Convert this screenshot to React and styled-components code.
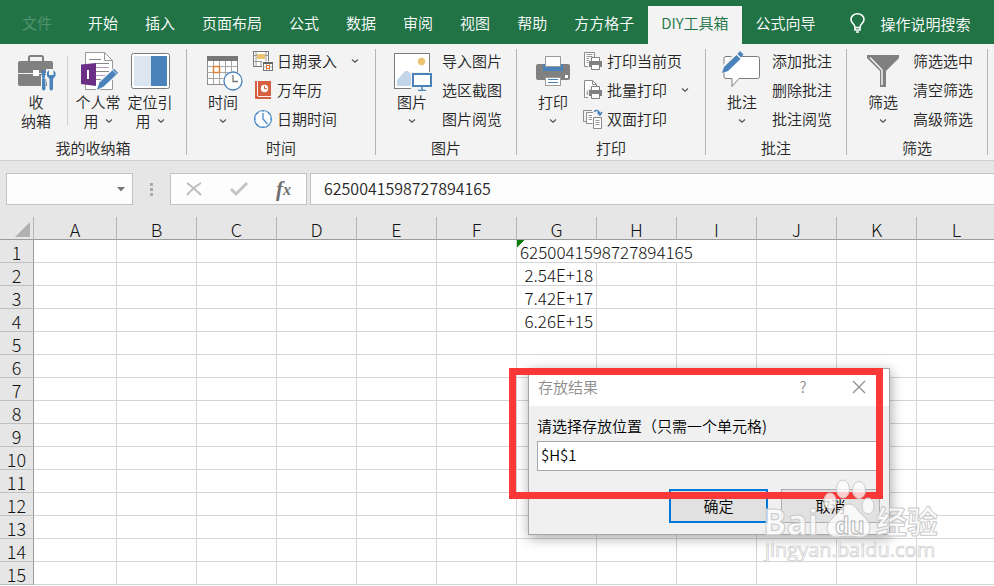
import React from 'react'
import styled, { createGlobalStyle, css } from 'styled-components'

const tabs = ['开始', '插入', '页面布局', '公式', '数据', '审阅', '视图', '帮助', '方方格子', 'DIY工具箱', '公式向导']
const columns = ['A', 'B', 'C', 'D', 'E', 'F', 'G', 'H', 'I', 'J', 'K', 'L']
const rows = Array.from({ length: 15 }, (_, i) => i + 1)
const cells = {
    G1: '6250041598727894165',
    G2: '2.54E+18',
    G3: '7.42E+17',
    G4: '6.26E+15',
}

/* ---------- icons ---------- */

const Chevron = () => (
    <svg width='8' height='6' viewBox='0 0 8 6' fill='none' stroke='#555' strokeWidth='1.2'>
        <path d='M1 1.500l3 2.600 3-2.600' />
    </svg>
)

const BulbIcon = () => (
    <svg width='15' height='20' viewBox='0 0 15 20' fill='none' stroke='#fff' strokeWidth='1.6'>
        <path d='M5 14.500c0-4-4-4-4-8a6.500 5.700 0 0 1 13 0c0 4-4 4-4 8zM5 14v3h5v-3M6 19h3' />
    </svg>
)

const ToolboxIcon = () => (
    <svg width='40' height='40' viewBox='0 0 40 40'>
        <path d='M13 10V6.500Q13 5 14.500 5h11Q27 5 27 6.500V10' fill='none' stroke='#808080' strokeWidth='2' />
        <rect x='2' y='10' width='35' height='25' rx='2' fill='#808080' />
        <path d='M2 22.500h35' stroke='#f3f3f3' />
        <rect x='17' y='19' width='6' height='6' fill='#fff' />
        <path d='M25 24h5v16h-5zM30 18h10v10l-2 12h-6l-2-12z' fill='#f3f3f3' />
        <path d='M26.500 19h2l1 2-1 7h-2l-1-7z' fill='#4a82ba' />
        <path d='M26 28h3.500v10q-2 3-3.500 0z' fill='#4a82ba' />
        <path d='M33 19l-2 2.500v3.500l2.500 3V38q1.500 3 3.500 0V28l2.500-3v-3.500l-2-2.500v5h-4.500z' fill='#4a82ba' />
    </svg>
)

const NotebookIcon = () => (
    <svg width='40' height='40' viewBox='0 0 40 40'>
        <path d='M7.500 1.500h19l8 8v29h-27z' fill='#fff' stroke='#999' />
        <path d='M26.500 1.500v8h8' fill='none' stroke='#999' />
        <path d='M11 8.500h12M18 12.500h13M18 20.500h13M18 28.500h7' stroke='#888' />
        <path d='M18 16.500h13M18 24.500h10' stroke='#b79ac6' />
        <path d='M3 13.500L18 12v23L3 33z' fill='#6b2f86' />
        <path d='M10 19v9' stroke='#fff' strokeWidth='2' />
        <path d='M18 40l3-9 15-14 5 5-15 14z' fill='#4a82ba' stroke='#f3f3f3' strokeWidth='1.200' />
        <path d='M34 18.500l4.500 4.500' stroke='#dbe6f1' />
    </svg>
)

const PanelIcon = () => (
    <svg width='40' height='40' viewBox='0 0 40 40'>
        <rect x='1.500' y='2.500' width='38' height='35' rx='2' fill='#fff' stroke='#7b7b7b' />
        <path d='M4 5h17v30H4z' fill='#dce6f0' />
        <path d='M21 5h16v30H21z' fill='#4a82ba' />
    </svg>
)

const CalendarIcon = () => (
    <svg width='40' height='40' viewBox='0 0 40 40'>
        <rect x='4.500' y='5.500' width='30' height='28' fill='#fff' stroke='#8c8c8c' />
        <path d='M4 5h31v5H4z' fill='#777' />
        <path d='M10.500 10v23M16.500 10v23M22.500 10v23M28.500 10v23M4 15.500h30M4 21.500h30M4 27.500h30' stroke='#a6a6a6' />
        <rect x='10.500' y='15.500' width='6' height='6' fill='#fff' stroke='#e0853c' strokeWidth='1.500' />
        <circle cx='30' cy='30' r='10' fill='#f3f3f3' />
        <circle cx='30' cy='30' r='9' fill='#fff' stroke='#4a82ba' strokeWidth='1.300' />
        <path d='M30 24v6.500h5' fill='none' stroke='#777' strokeWidth='1.300' />
    </svg>
)

const PictureIcon = () => (
    <svg width='40' height='40' viewBox='0 0 40 40'>
        <rect x='2.500' y='2.500' width='35' height='35' fill='#fff' stroke='#7b7b7b' />
        <circle cx='29.500' cy='10.500' r='3.700' fill='#edc472' />
        <path d='M5 35v-6l8-9h3l6 6v9z' fill='#c2d5e9' />
        <path d='M19 21h21v19H19z' fill='#f3f3f3' />
        <rect x='21' y='23' width='18' height='12' fill='#fff' stroke='#4a82ba' strokeWidth='2' />
        <path d='M30 36v3M26 39.500h8' stroke='#4a82ba' strokeWidth='1.500' />
    </svg>
)

const PrinterIcon = () => (
    <svg width='40' height='40' viewBox='0 0 40 40'>
        <rect x='3' y='13' width='34' height='16' rx='2' fill='#808080' />
        <path d='M10 13h20v7H10z' fill='#4a82ba' />
        <path d='M12.500 5.500h15v10h-15z' fill='#fff' stroke='#999' />
        <rect x='32' y='24' width='3' height='3' fill='#fff' />
        <path d='M12.500 26.500h15v8h-15z' fill='#fff' stroke='#999' />
        <path d='M15 28.500h10M15 31.500h10' stroke='#4a82ba' />
    </svg>
)

const CommentIcon = () => (
    <svg width='40' height='40' viewBox='0 0 40 40'>
        <path d='M4 5.500h31.500q2 0 2 2v18q0 2-2 2H17l-7 8v-8H4q-2 0-2-2v-18q0-2 2-2z' fill='#fff' stroke='#7b7b7b' />
        <path d='M0 15L15 0h6l-1 6L6 20l-6 3z' fill='#f3f3f3' />
        <path d='M0 22l2-6L14.500 4l4 4L6 20zM15.500 3L18 0l3.500 3.500L19 6.500z' fill='#4a82ba' />
    </svg>
)

const FunnelIcon = () => (
    <svg width='40' height='40' viewBox='0 0 40 40'>
        <path d='M4 4h32v3L23 20v16h-6V20L4 7z' fill='#808080' />
        <path d='M7 6.500l12 12.500v15' fill='none' stroke='#f3f3f3' strokeWidth='1.500' />
    </svg>
)

const DateEntryIcon = () => (
    <svg width='20' height='20' viewBox='0 0 20 20'>
        <rect x='.5' y='.5' width='15' height='15' fill='#fff' stroke='#7b7b7b' />
        <path d='M3 1v14M13 1v14M1 10.500h14M8 10v5M1 4.500h3M12 4.500h3' stroke='#9b9b9b' />
        <rect x='4' y='3' width='8' height='5' fill='#edc472' />
        <rect x='9' y='10' width='11' height='10' fill='#f3f3f3' />
        <rect x='10.500' y='11.500' width='9' height='8' fill='#fff' stroke='#777' />
        <path d='M10 12h10' stroke='#666' strokeWidth='2' />
        <path d='M10 16h9M13.500 13v6M16.500 13v6' stroke='#999' strokeWidth='.8' />
        <rect x='13.500' y='14.500' width='3' height='3' fill='#fff' stroke='#e0702c' />
    </svg>
)

const AlmanacIcon = () => (
    <svg width='20' height='20' viewBox='0 0 20 20'>
        <path d='M2 1h16v15H5v1h13v2H3q-1 0-1-1z' fill='#d65f3f' />
        <path d='M4.500 1v15' stroke='#f3f3f3' />
        <circle cx='11.500' cy='8.500' r='3.700' fill='#fff' />
        <path d='M11.500 6v2.700h2.500' fill='none' stroke='#d65f3f' />
    </svg>
)

const ClockIcon = () => (
    <svg width='20' height='20' viewBox='0 0 20 20' fill='none' stroke='#4a8ac6'>
        <circle cx='10' cy='10' r='8.500' fill='#fafcfe' strokeWidth='1.200' />
        <path d='M10 4v6l4.500 5' strokeWidth='1.300' />
        <path d='M10 1.500v1.500M10 17v1.500M1.500 10H3M17 10h1.500M4 4l1 1M16 4l-1 1M4 16l1-1' />
    </svg>
)

const SmallPrinter = () => (
    <g>
        <path d='M6 6h11v4h3v8h-3v2H8v-2H5v-8h1z' fill='#f3f3f3' />
        <path d='M8.500 6.500h8v4h-8z' fill='#fff' stroke='#808080' />
        <path d='M6 10h13v6H6z' fill='#808080' />
        <path d='M8.500 13.500h8v5h-8z' fill='#fff' stroke='#808080' />
    </g>
)

const PrintPageIcon = () => (
    <svg width='20' height='20' viewBox='0 0 20 20'>
        <path d='M1.500 1.500h10v14h-10z' fill='#fff' stroke='#8b8b8b' />
        <path d='M3.500 3.500h6M3.500 5.500h6M3.500 7.500h6M3.500 9.500h6M3.500 11.500h6' stroke='#999' />
        <SmallPrinter />
    </svg>
)

const PrintBatchIcon = () => (
    <svg width='20' height='20' viewBox='0 0 20 20'>
        <path d='M1.500.5h8l4 4v13h-12z' fill='#fff' stroke='#8b8b8b' />
        <path d='M9.500.5v4h4' fill='none' stroke='#8b8b8b' />
        <path d='M3.500 15v-3l2-3v6z' fill='#aaa' />
        <SmallPrinter />
    </svg>
)

const DuplexIcon = () => (
    <svg width='20' height='20' viewBox='0 0 20 20' fill='none' stroke='#8b8b8b'>
        <path d='M9 1.500H.5v11H3' />
        <path d='M10 3.500H3.500v11h6' fill='#fff' />
        <path d='M5.500 6.500H9M5.500 8.500H9M5.500 10.500H9' stroke='#999' />
        <path d='M10.500 8.500h8v11h-8z' fill='#fff' />
        <path d='M12.500 11.500h4M12.500 13.500h4M12.500 15.500h4' stroke='#999' />
        <path d='M11 2.500Q15-.5 17 5M14.500 3.500L17 6l2-3' stroke='#4a82ba' strokeWidth='1.500' />
    </svg>
)

/* ---------- ribbon ---------- */

const groups = [
    {
        name: '时间',
        big: { icon: <CalendarIcon />, label: '时间' },
        items: [
            { icon: <DateEntryIcon />, label: '日期录入', menu: true },
            { icon: <AlmanacIcon />, label: '万年历' },
            { icon: <ClockIcon />, label: '日期时间' },
        ],
    },
    {
        name: '图片',
        big: { icon: <PictureIcon />, label: '图片' },
        items: [{ label: '导入图片' }, { label: '选区截图' }, { label: '图片阅览' }],
    },
    {
        name: '打印',
        big: { icon: <PrinterIcon />, label: '打印' },
        items: [
            { icon: <PrintPageIcon />, label: '打印当前页' },
            { icon: <PrintBatchIcon />, label: '批量打印', menu: true },
            { icon: <DuplexIcon />, label: '双面打印' },
        ],
    },
    {
        name: '批注',
        big: { icon: <CommentIcon />, label: '批注' },
        items: [{ label: '添加批注' }, { label: '删除批注' }, { label: '批注阅览' }],
    },
    {
        name: '筛选',
        big: { icon: <FunnelIcon />, label: '筛选' },
        items: [{ label: '筛选选中' }, { label: '清空筛选' }, { label: '高级筛选' }],
    },
]

const Ribbon = () => (
    <RibbonBar>
        <Group>
            <GroupBody>
                <BigButton type='button'>
                    <ToolboxIcon />
                    <span>收</span>
                    <span>纳箱</span>
                </BigButton>
                <Divider />
                <BigButton type='button'>
                    <NotebookIcon />
                    <span>个人常</span>
                    <MenuLine>用 <Chevron /></MenuLine>
                </BigButton>
                <BigButton type='button'>
                    <PanelIcon />
                    <span>定位引</span>
                    <MenuLine>用 <Chevron /></MenuLine>
                </BigButton>
            </GroupBody>
            <GroupName>我的收纳箱</GroupName>
        </Group>
        {groups.map(({ name, big, items }) => (
            <Group key={name}>
                <GroupBody>
                    <BigButton type='button'>
                        {big.icon}
                        <span>{big.label}</span>
                        <MenuLine><Chevron /></MenuLine>
                    </BigButton>
                    <SmallList>
                        {items.map(({ icon, label, menu }) => (
                            <SmallButton type='button' key={label}>
                                {icon}
                                <SmallLabel>{label}</SmallLabel>
                                {menu && <MenuMark><Chevron /></MenuMark>}
                            </SmallButton>
                        ))}
                    </SmallList>
                </GroupBody>
                <GroupName>{name}</GroupName>
            </Group>
        ))}
    </RibbonBar>
)

/* ---------- formula bar ---------- */

const FormulaBar = () => (
    <FormulaRow>
        <NameBox>
            <input aria-label='Name box' />
            <button type='button' aria-label='Names'>
                <svg width='8' height='5' viewBox='0 0 8 5'><path d='M0 0h8L4 4.500z' fill='#777' /></svg>
            </button>
        </NameBox>
        <Grip>
            <svg width='3' height='13' viewBox='0 0 3 13' fill='#aaa'>
                <path d='M0 0h3v3H0zM0 5h3v3H0zM0 10h3v3H0z' />
            </svg>
        </Grip>
        <FormulaTools>
            <button type='button' aria-label='Cancel'>
                <svg width='16' height='16' viewBox='0 0 16 16' fill='none' stroke='#bdbdbd' strokeWidth='2'>
                    <path d='M1 2q7 5 14 12M15 2Q8 6 1 14' />
                </svg>
            </button>
            <button type='button' aria-label='Enter'>
                <svg width='18' height='16' viewBox='0 0 18 16' fill='none' stroke='#c4c4c4' strokeWidth='3'>
                    <path d='M1 8l5 5L17 2' />
                </svg>
            </button>
            <FxButton type='button'>f<small>x</small></FxButton>
        </FormulaTools>
        <FormulaInput aria-label='Formula' defaultValue={cells.G1} />
    </FormulaRow>
)

/* ---------- sheet ---------- */

const Sheet = () => (
    <Table>
        <colgroup>
            <Col $w={34} />
            {columns.map((c) => <Col key={c} $w={c === 'A' ? 83 : 80} />)}
        </colgroup>
        <thead>
            <tr>
                <Corner>
                    <svg width='15' height='15' viewBox='0 0 15 15'><path d='M15 0v15H0z' fill='#b1b1b1' /></svg>
                </Corner>
                {columns.map((c) => <ColHead key={c} scope='col'>{c}</ColHead>)}
            </tr>
        </thead>
        <tbody>
            {rows.map((r) => (
                <tr key={r}>
                    <RowHead scope='row'>{r}</RowHead>
                    {columns.map((c) => {
                        // the long text in G1 spills over H1 and I1
                        if (r === 1 && (c === 'H' || c === 'I')) return null
                        const isText = r === 1 && c === 'G'
                        return (
                            <Cell key={c} $text={isText} colSpan={isText ? 3 : 1}>
                                {cells[c + r]}
                            </Cell>
                        )
                    })}
                </tr>
            ))}
        </tbody>
    </Table>
)

/* ---------- dialog ---------- */

const ResultDialog = () => (
    <DialogLayer>
        <Dialog role='dialog' aria-labelledby='dialog-title'>
            <TitleBar>
                <h2 id='dialog-title'>存放结果</h2>
                <button type='button'>?</button>
                <button type='button' aria-label='Close'>
                    <svg width='14' height='14' viewBox='0 0 14 14' stroke='#8c8c8c' strokeWidth='1.200'>
                        <path d='M1 1l12 12M13 1L1 13' />
                    </svg>
                </button>
            </TitleBar>
            <DialogBody>
                <label htmlFor='target'>请选择存放位置（只需一个单元格)</label>
                <input id='target' defaultValue='$H$1' />
                <Actions>
                    <ActionButton type='button' $primary>确定</ActionButton>
                    <ActionButton type='button'>取消</ActionButton>
                </Actions>
            </DialogBody>
        </Dialog>
        <Highlight />
        <Watermark />
    </DialogLayer>
)

const Watermark = () => (
    <WatermarkSvg width='184' height='92' viewBox='0 0 184 92'>
        <g fill='#fff' fillOpacity='.75' stroke='#cacaca' strokeWidth='1'>
            <ellipse cx='82' cy='11' rx='6.500' ry='9' />
            <ellipse cx='98' cy='12' rx='6.500' ry='8.500' />
            <ellipse cx='69' cy='23' rx='6' ry='8' />
            <ellipse cx='107' cy='28' rx='6' ry='8' />
            <path d='M88 26c-6 0-8 6-12 10s-10 8-10 14 6 10 11 9 14-1 20 0 12-2 12-9-5-10-9-14-6-10-12-10z' />
            <text x='2' y='57' fontSize='35' fontWeight='700'>Bai</text>
            <text x='74' y='56' fontSize='23' fontWeight='700' stroke='#b5b5b5'>du</text>
            <text x='115' y='55' fontSize='31' fontWeight='700'>经验</text>
            <text x='4' y='79' fontSize='20' fontWeight='500' strokeWidth='.7'>jingyan.baidu.com</text>
        </g>
    </WatermarkSvg>
)

const App = () => (
    <Window>
        <GlobalStyle />
        <TabBar>
            <Tab type='button' $file>文件</Tab>
            {tabs.map((t) => <Tab type='button' key={t} $active={t === 'DIY工具箱'}>{t}</Tab>)}
            <SearchButton type='button'>
                <BulbIcon />
                操作说明搜索
            </SearchButton>
        </TabBar>
        <Ribbon />
        <FormulaBar />
        <Sheet />
        <ResultDialog />
    </Window>
)

const GlobalStyle = createGlobalStyle`
  * {
    box-sizing: border-box;
  }
  body {
    margin: 0;
    background: #fff;
    overflow: hidden;
  }
  button, input {
    font: inherit;
    color: inherit;
    background: none;
    border: 0;
    border-radius: 0;
    padding: 0;
    margin: 0;
    outline: 0;
  }
  button {
    cursor: pointer;
  }
  svg {
    display: block;
    flex-shrink: 0;
  }
`

const Window = styled.div`
  position: relative;
  min-height: 100vh;
  font-family: "Noto Sans CJK SC", sans-serif;
  font-size: 15px;
  font-weight: 350;
  color: #262626;
  white-space: nowrap;
`

const TabBar = styled.nav`
  display: flex;
  gap: 1px;
  padding: 6px 0 0 9px;
  background: #217346;
`

const Tab = styled.button`
  height: 38px;
  padding: 0 13px 5px;
  color: #fff;

  ${({ $active }) => $active && css`
    background: #f3f3f3;
    color: #217346;
  `}
  ${({ $file }) => $file && css`
    padding-right: 22px;
    color: #569573;
  `}
`

const SearchButton = styled.button`
  display: flex;
  align-items: center;
  gap: 16px;
  padding: 0 0 4px 20px;
  color: #fff;
`

const RibbonBar = styled.div`
  display: flex;
  padding: 5px 0;
  background: #f3f3f3;
  border-bottom: 1px solid #d0d0d0;
`

const Group = styled.section`
  display: flex;
  flex-direction: column;
  gap: 9px;
  border-right: 1px solid #b5b5b5;
`

const GroupBody = styled.div`
  display: flex;
  height: 82px;
  padding: 0 10px;
`

const GroupName = styled.div`
  line-height: 15px;
  text-align: center;
`

const BigButton = styled.button`
  display: flex;
  flex-direction: column;
  align-items: center;
  width: 52px;
  padding-top: 2px;
  line-height: 19px;

  svg + span {
    margin-top: 1px;
  }
`

const MenuLine = styled.span`
  display: flex;
  align-items: center;
  gap: 6px;
  height: 19px;
`

const Divider = styled.div`
  width: 1px;
  margin: 7px 4px 6px 5px;
  background: #d0d0d0;
`

const SmallList = styled.div`
  display: flex;
  flex-direction: column;
  gap: 5px;
  padding: 0 4px;
`

const SmallButton = styled.button`
  display: flex;
  align-items: center;
  gap: 4px;
  height: 24px;
`

const SmallLabel = styled.span`
  padding-bottom: 2px;
`

const MenuMark = styled.span`
  margin: 0 2px 0 10px;
`

const FormulaRow = styled.div`
  display: flex;
  padding: 12px 0 12px 6px;
  background: #e6e6e6;
`

const box = css`
  height: 32px;
  background: #fdfdfd;
  border: 1px solid #c3c3c3;
`

const NameBox = styled.div`
  ${box}
  display: flex;
  width: 127px;

  input {
    flex: 1;
    min-width: 0;
    padding-left: 8px;
  }
  button {
    padding: 0 7px;
  }
`

const Grip = styled.div`
  display: grid;
  place-items: center;
  width: 37px;
`

const FormulaTools = styled.div`
  ${box}
  display: flex;
  margin-right: 3px;

  button {
    display: grid;
    place-items: center;
    width: 45px;
  }
`

const FxButton = styled.button`
  && {
    display: flex;
    justify-content: center;
    align-items: center;
    font-family: "Liberation Serif", serif;
    font-style: italic;
    font-weight: 700;
    font-size: 21px;
    line-height: 28px;
    color: #6e6e6e;
  }
  small {
    font-size: 16px;
    padding-top: 2px;
  }
`

const FormulaInput = styled.input`
  ${box}
  flex: 1;
  min-width: 0;
  padding: 0 0 2px 13px;
  border-right: 0;
  font-size: 16px;
`

const Table = styled.table`
  table-layout: fixed;
  width: 100%;
  min-width: 997px;
  border-spacing: 0;
  color: #111;
  font-size: 17px;
  font-weight: 300;
  line-height: 20px;

  th, td {
    height: 23px;
    padding: 2px 0 0;
  }
`

const Col = styled.col`
  width: ${({ $w }) => $w}px;
`

const heading = css`
  background-color: #e6e6e6;
  font-size: 18px;
  font-weight: 300;
`

const Corner = styled.td`
  ${heading}
  border-right: 1px solid #b5b5b5;
  border-bottom: 1px solid #9b9b9b;

  svg {
    margin: 0 3px 0 auto;
  }
`

const ColHead = styled.th`
  ${heading}
  border-right: 1px solid #b5b5b5;
  border-bottom: 1px solid #9b9b9b;
`

const RowHead = styled.th`
  ${heading}
  border-right: 1px solid #9b9b9b;
  border-bottom: 1px solid #c0c0c0;
`

const Cell = styled.td`
  border-right: 1px solid #d4d4d4;
  border-bottom: 1px solid #d4d4d4;
  text-align: ${({ $text }) => ($text ? 'left' : 'right')};

  && {
    padding: 2px 3px 0;
  }
  ${({ $text }) => $text && css`
    background: linear-gradient(135deg, #0a7d0a 5px, transparent 5px);
  `}
`

const DialogLayer = styled.div`
  position: absolute;
  left: 528px;
  top: 368px;
  width: 362px;
`

const Dialog = styled.div`
  background: #f0f0f0;
  border: 1px solid #a6a6a6;
  box-shadow: 1px 3px 12px rgba(0, 0, 0, 0.35);
  color: #000;
`

const TitleBar = styled.header`
  display: flex;
  align-items: center;
  height: 37px;
  padding: 0 2px 2px 9px;
  background: #fff;
  color: #8c8c8c;

  h2 {
    flex: 1;
    margin: 0;
    font-size: 15px;
    font-weight: 350;
  }
  button {
    display: grid;
    place-items: center;
    width: 56px;
  }
`

const DialogBody = styled.div`
  display: flex;
  flex-direction: column;
  padding: 10px 9px 11px 8px;

  label {
    line-height: 20px;
    margin-bottom: 5px;
  }
  input {
    height: 30px;
    padding: 0 3px 4px;
    background: #fff;
    border: 1px solid #a5a8ae;
  }
`

const Actions = styled.div`
  display: flex;
  justify-content: flex-end;
  gap: 13px;
  margin-top: 18px;
`

const ActionButton = styled.button`
  width: 99px;
  height: 34px;
  padding-bottom: 2px;
  background: #e1e1e1;
  border: ${({ $primary }) => ($primary ? '2px solid #0078d7' : '1px solid #adadad')};
`

const Highlight = styled.div`
  position: absolute;
  left: -19px;
  top: 0;
  width: 374px;
  height: 131px;
  border: 7px solid #fb3838;
  pointer-events: none;
`

const WatermarkSvg = styled.svg`
  position: absolute;
  left: 233px;
  top: 110px;
  font-family: "Open Sans", "Noto Sans CJK SC", sans-serif;
  pointer-events: none;
`

export default App
